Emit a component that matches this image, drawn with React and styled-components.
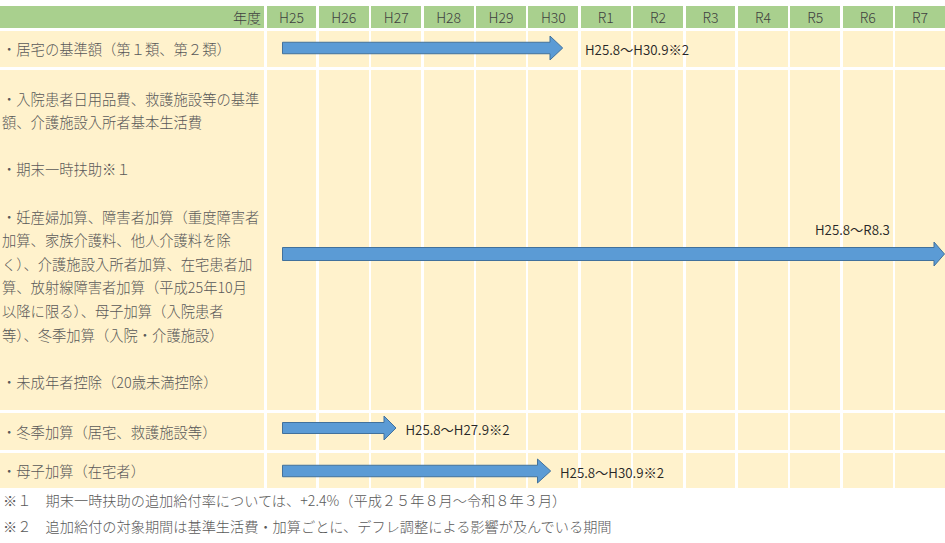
import React from 'react';
import styled, { createGlobalStyle } from 'styled-components';

const Global = createGlobalStyle`
  html, body { margin: 0; padding: 0; background: #ffffff; overflow: hidden; }
  body { font-family: "Noto Sans CJK JP", "Noto Sans", sans-serif; }
`;

const Page = styled.div`
  width: 945px;
  padding-top: 6px;
`;

const Table = styled.div`
  display: flex;
  flex-direction: column;
  gap: 3px;
`;

const Row = styled.div`
  position: relative;
  display: grid;
  grid-template-columns: 264px repeat(13, 1fr);
  column-gap: 2.5px;
  height: ${(p) => p.$h}px;
  overflow: hidden;
`;

const HeadCell = styled.div`
  background: #a9d08e;
  color: #404040;
  font-size: 14px;
  font-weight: 300;
  display: flex;
  align-items: center;
  justify-content: ${(p) => (p.$right ? 'flex-end' : 'center')};
  padding-right: ${(p) => (p.$right ? '3px' : '0')};
`;

const LabelCell = styled.div`
  background: #fff2cc;
  color: #595959;
  font-size: 14.3px;
  font-weight: 300;
  padding-left: 2px;
  display: flex;
  flex-direction: column;
  justify-content: center;
  white-space: nowrap;
`;

const Line = styled.div`
  line-height: 23.6px;
  height: 23.6px;
`;

const Cell = styled.div`
  background: #fff2cc;
`;

const ArrowSvg = styled.svg`
  position: absolute;
  left: ${(p) => p.$x}px;
  top: ${(p) => p.$y}px;
  overflow: visible;
`;

const Period = styled.span`
  position: absolute;
  left: ${(p) => p.$x}px;
  top: ${(p) => p.$y}px;
  transform: translateY(-50%);
  font-size: 13.3px;
  font-weight: 350;
  line-height: 1;
  color: #262626;
  white-space: nowrap;
`;

const Notes = styled.div`
  padding-left: 3px;
  font-size: 14.2px;
  font-weight: 300;
  line-height: 25.5px;
  color: #595959;
  white-space: nowrap;
`;

const years = ['H25', 'H26', 'H27', 'H28', 'H29', 'H30', 'R1', 'R2', 'R3', 'R4', 'R5', 'R6', 'R7'];

const rows = [
  {
    h: 36,
    lines: ['・居宅の基準額（第１類、第２類）'],
    arrow: { cy: 17, base: 550, tip: 562.7, shaft: 11.5 },
    period: { text: 'H25.8〜H30.9※2', x: 585, cy: 19 },
  },
  {
    h: 340,
    lines: [
      '・入院患者日用品費、救護施設等の基準',
      '額、介護施設入所者基本生活費',
      '',
      '・期末一時扶助※１',
      '',
      '・妊産婦加算、障害者加算（重度障害者',
      '加算、家族介護料、他人介護料を除',
      'く）、介護施設入所者加算、在宅患者加',
      '算、放射線障害者加算（平成25年10月',
      '以降に限る）、母子加算（入院患者',
      '等）、冬季加算（入院・介護施設）',
      '',
      '・未成年者控除（20歳未満控除）',
    ],
    arrow: { cy: 183.5, base: 934, tip: 944.5, shaft: 13 },
    period: { text: 'H25.8〜R8.3', x: 815, cy: 159.5 },
  },
  {
    h: 37,
    lines: ['・冬季加算（居宅、救護施設等）'],
    arrow: { cy: 14.5, base: 384, tip: 396, shaft: 11 },
    period: { text: 'H25.8〜H27.9※2', x: 405.5, cy: 17 },
  },
  {
    h: 35,
    lines: ['・母子加算（在宅者）'],
    arrow: { cy: 18, base: 537.5, tip: 550.7, shaft: 11.5 },
    period: { text: 'H25.8〜H30.9※2', x: 560, cy: 20.3 },
  },
];

const START = 282;

function Arrow({ cy, base, tip, shaft }) {
  const w = tip - START + 2;
  const mid = 13;
  const st = mid - shaft / 2;
  const sb = mid + shaft / 2;
  const b = base - START;
  const t = tip - START;
  const pts = `0.5,${st} ${b},${st} ${b},1 ${t},${mid} ${b},25 ${b},${sb} 0.5,${sb}`;
  return (
    <ArrowSvg $x={START} $y={cy - mid} width={w} height={26} viewBox={`0 0 ${w} 26`}>
      <polygon points={pts} fill="#5b9bd5" stroke="#41719c" strokeWidth="1" />
    </ArrowSvg>
  );
}

export default function App() {
  return (
    <Page>
      <Global />
      <Table>
        <Row $h={22}>
          <HeadCell $right>年度</HeadCell>
          {years.map((y) => (
            <HeadCell key={y}>{y}</HeadCell>
          ))}
        </Row>
        {rows.map((r, i) => (
          <Row key={i} $h={r.h}>
            <LabelCell>
              {r.lines.map((l, j) => (
                <Line key={j}>{l || '\u00a0'}</Line>
              ))}
            </LabelCell>
            {years.map((y) => (
              <Cell key={y} />
            ))}
            <Arrow {...r.arrow} />
            <Period $x={r.period.x} $y={r.period.cy}>
              {r.period.text}
            </Period>
          </Row>
        ))}
      </Table>
      <Notes>
        <div>※１　期末一時扶助の追加給付率については、+2.4%（平成２５年８月～令和８年３月）</div>
        <div>※２　追加給付の対象期間は基準生活費・加算ごとに、デフレ調整による影響が及んでいる期間</div>
      </Notes>
    </Page>
  );
}
